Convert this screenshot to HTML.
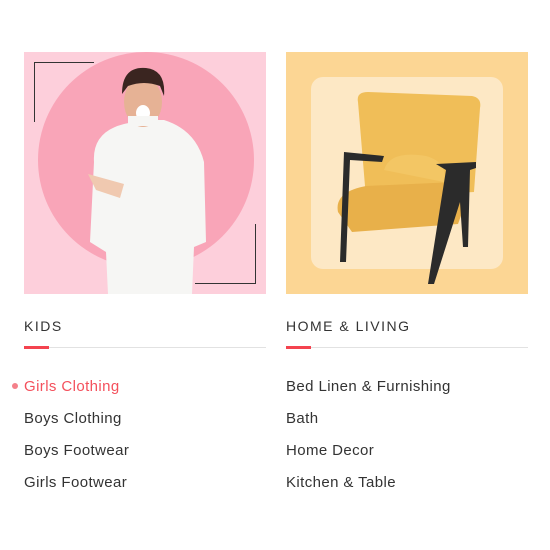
<!DOCTYPE html>
<html><head><style>
*{margin:0;padding:0;box-sizing:border-box}
body{width:550px;height:550px;background:#fff;font-family:"Liberation Sans",sans-serif;position:relative;overflow:hidden}
.p{position:absolute;top:52px;width:242px;height:242px;overflow:hidden}
.h{position:absolute;top:318px;font-size:14px;letter-spacing:1.5px;color:#333}
.ln{position:absolute;top:347px;width:242px;height:1px;background:#e2e2e2}
.rd{position:absolute;top:346px;width:25px;height:3px;background:#f4434f}
.it{position:absolute;font-size:15px;color:#333;letter-spacing:.4px}
</style></head><body>
<div class="p" style="left:24px;background:#fdcfdb">
<div style="position:absolute;left:14px;top:0px;width:216px;height:216px;border-radius:50%;background:#f9a5b8;top:0"></div>
<div style="position:absolute;left:10px;top:10px;width:60px;height:60px;border-top:1.5px solid #333;border-left:1.5px solid #333"></div>
<div style="position:absolute;left:171px;top:172px;width:61px;height:60px;border-bottom:1.5px solid #333;border-right:1.5px solid #333"></div>
<svg style="position:absolute;left:0;top:0" width="242" height="242">
<path d="M70 110 Q68 80 100 72 L118 68 L140 68 Q172 78 180 110 L182 190 L170 195 L168 242 L84 242 L82 200 L66 190 Z" fill="#f6f6f4"/>
<path d="M64 122 L100 132 L96 146 L72 138 Z" fill="#f0c9b0"/>
<ellipse cx="119" cy="50" rx="19" ry="25" fill="#e6b295"/>
<path d="M98 42 Q98 14 122 16 Q142 18 140 44 L136 34 Q120 28 104 34 Z" fill="#3a2520"/>
<ellipse cx="119" cy="61" rx="7" ry="8" fill="#fff"/>
<rect x="104" y="64" width="30" height="10" fill="#f6f6f4"/>
</svg>
</div>
<div class="p" style="left:286px;background:#fcd694">
<div style="position:absolute;left:25px;top:25px;width:192px;height:192px;border-radius:12px;background:#fde8c5"></div>
<svg style="position:absolute;left:0;top:0" width="242" height="242">
<path d="M72 50 Q70 40 82 40 L186 44 Q196 46 194 56 L188 140 L80 146 Z" fill="#f0be58"/>
<path d="M52 160 Q48 140 80 134 L170 130 Q186 132 180 150 L172 172 L66 180 Z" fill="#e8b04a"/>
<path d="M98 118 Q104 98 140 104 Q162 110 158 130 Z" fill="#f3c664"/>
<path d="M58 100 L98 104 L96 110 L64 108 L60 210 L54 210 Z" fill="#2b2b2b"/>
<path d="M150 112 L190 110 L190 116 L184 118 L182 195 L177 195 L174 150 L148 232 L142 232 L160 118 Z" fill="#2b2b2b"/>
</svg>
</div>
<div class="h" style="left:24px">KIDS</div>
<div class="h" style="left:286px">HOME &amp; LIVING</div>
<div class="ln" style="left:24px"></div><div class="rd" style="left:24px"></div>
<div class="ln" style="left:286px"></div><div class="rd" style="left:286px"></div>
<div style="position:absolute;left:12px;top:383px;width:6px;height:6px;border-radius:50%;background:#f4808a"></div>
<div class="it" style="left:24px;top:378px;color:#f4505c">Girls Clothing</div>
<div class="it" style="left:24px;top:410px">Boys Clothing</div>
<div class="it" style="left:24px;top:442px">Boys Footwear</div>
<div class="it" style="left:24px;top:474px">Girls Footwear</div>
<div class="it" style="left:286px;top:378px">Bed Linen &amp; Furnishing</div>
<div class="it" style="left:286px;top:410px">Bath</div>
<div class="it" style="left:286px;top:442px">Home Decor</div>
<div class="it" style="left:286px;top:474px">Kitchen &amp; Table</div>
</body></html>
